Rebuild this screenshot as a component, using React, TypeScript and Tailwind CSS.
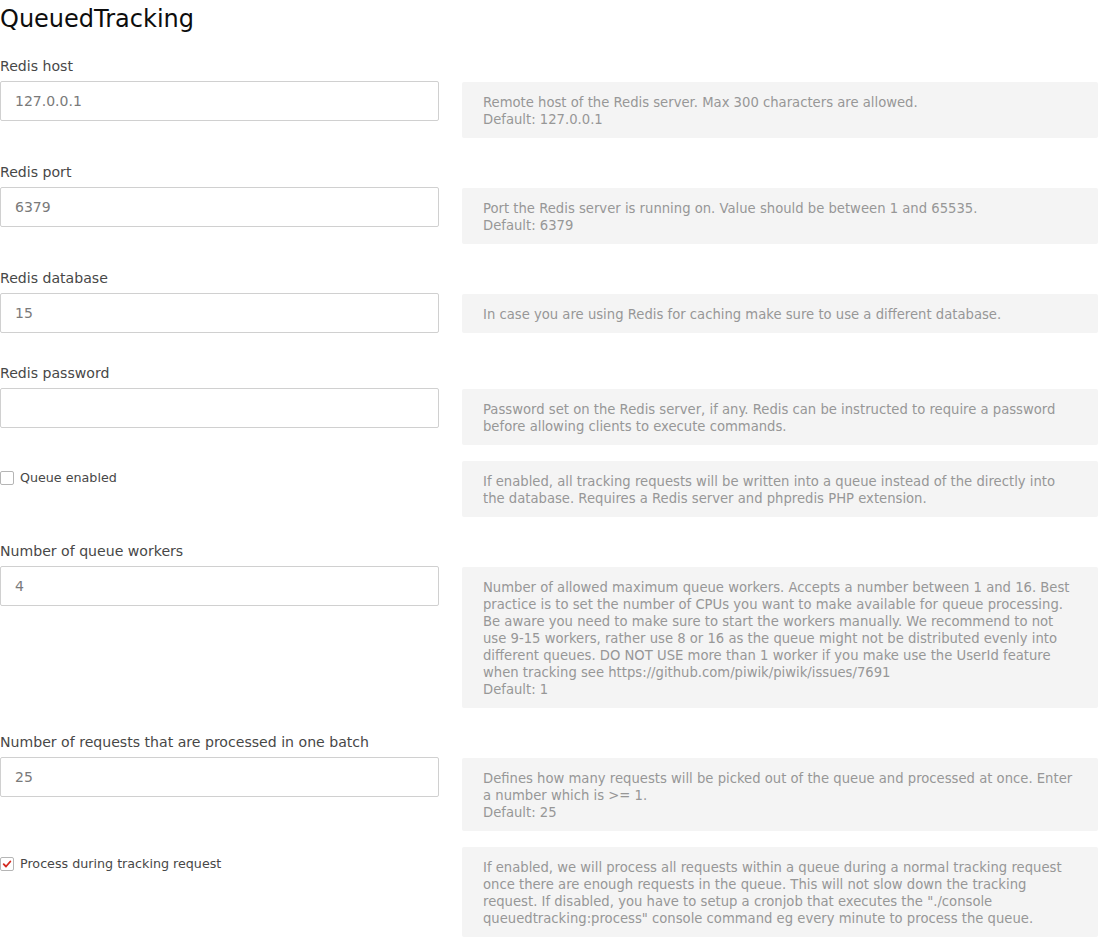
import { useState } from 'react';

type Setting =
  | { kind: 'text'; id: string; label: string; value: string; help: string[] }
  | { kind: 'check'; id: string; label: string; checked: boolean; help: string[] };

// help lines are kept as they break in the settings page
const settings: Setting[] = [
  {
    kind: 'text',
    id: 'redisHost',
    label: 'Redis host',
    value: '127.0.0.1',
    help: ['Remote host of the Redis server. Max 300 characters are allowed.', 'Default: 127.0.0.1'],
  },
  {
    kind: 'text',
    id: 'redisPort',
    label: 'Redis port',
    value: '6379',
    help: ['Port the Redis server is running on. Value should be between 1 and 65535.', 'Default: 6379'],
  },
  {
    kind: 'text',
    id: 'redisDatabase',
    label: 'Redis database',
    value: '15',
    help: ['In case you are using Redis for caching make sure to use a different database.'],
  },
  {
    kind: 'text',
    id: 'redisPassword',
    label: 'Redis password',
    value: '',
    help: [
      'Password set on the Redis server, if any. Redis can be instructed to require a password',
      'before allowing clients to execute commands.',
    ],
  },
  {
    kind: 'check',
    id: 'queueEnabled',
    label: 'Queue enabled',
    checked: false,
    help: [
      'If enabled, all tracking requests will be written into a queue instead of the directly into',
      'the database. Requires a Redis server and phpredis PHP extension.',
    ],
  },
  {
    kind: 'text',
    id: 'numQueueWorkers',
    label: 'Number of queue workers',
    value: '4',
    help: [
      'Number of allowed maximum queue workers. Accepts a number between 1 and 16. Best',
      'practice is to set the number of CPUs you want to make available for queue processing.',
      'Be aware you need to make sure to start the workers manually. We recommend to not',
      'use 9-15 workers, rather use 8 or 16 as the queue might not be distributed evenly into',
      'different queues. DO NOT USE more than 1 worker if you make use the UserId feature',
      'when tracking see https://github.com/piwik/piwik/issues/7691',
      'Default: 1',
    ],
  },
  {
    kind: 'text',
    id: 'numRequestsToProcess',
    label: 'Number of requests that are processed in one batch',
    value: '25',
    help: [
      'Defines how many requests will be picked out of the queue and processed at once. Enter',
      'a number which is >= 1.',
      'Default: 25',
    ],
  },
  {
    kind: 'check',
    id: 'processDuringTrackingRequest',
    label: 'Process during tracking request',
    checked: true,
    help: [
      'If enabled, we will process all requests within a queue during a normal tracking request',
      'once there are enough requests in the queue. This will not slow down the tracking',
      'request. If disabled, you have to setup a cronjob that executes the "./console',
      'queuedtracking:process" console command eg every minute to process the queue.',
    ],
  },
];

function HelpBox({ lines, className = '' }: { lines: string[]; className?: string }) {
  return (
    <div
      className={`flex-1 rounded-[2px] bg-[#f4f4f4] px-[21px] pt-[12px] pb-[10px] text-[13.2px] leading-[17px] text-[#979797] ${className}`}
    >
      {lines.map((line, i) => (
        <div key={i} className="whitespace-nowrap">
          {line}
        </div>
      ))}
    </div>
  );
}

function Checkbox({ checked, onChange }: { checked: boolean; onChange: () => void }) {
  return (
    <button
      type="button"
      onClick={onChange}
      className="flex h-[14px] w-[14px] shrink-0 items-center justify-center rounded-[2px] border border-[#b5b5b5] bg-white"
    >
      {checked && (
        <svg viewBox="0 0 12 12" className="h-[10px] w-[10px]">
          <path d="M2 6.2 L4.8 9 L10 3" fill="none" stroke="#d4291f" strokeWidth="2.2" strokeLinecap="round" strokeLinejoin="round" />
        </svg>
      )}
    </button>
  );
}

export default function App() {
  const [values, setValues] = useState<Record<string, string | boolean>>(() =>
    Object.fromEntries(settings.map(s => [s.id, s.kind === 'text' ? s.value : s.checked]))
  );

  const update = (id: string, v: string | boolean) => setValues(prev => ({ ...prev, [id]: v }));

  return (
    <div className="min-h-screen w-[1098px] bg-white font-['DejaVu_Sans',sans-serif]">
      {/* Title */}
      <h2 className="pt-[3px] text-[24px] leading-[32px] text-[#0d0d0d]">QueuedTracking</h2>

      <div className="flex flex-col pt-[21px]">
        {settings.map((s, idx) =>
          s.kind === 'text' ? (
            <div key={s.id} className={`flex items-start gap-[23px] ${idx === 0 ? '' : 'mt-[24px]'}`}>
              {/* Label + input */}
              <div className="w-[439px] shrink-0 pb-[6px]">
                <label htmlFor={s.id} className="mb-[5px] block text-[14.1px] leading-[20px] text-[#474747]">
                  {s.label}
                </label>
                <input
                  id={s.id}
                  type={s.id === 'redisPassword' ? 'password' : 'text'}
                  value={values[s.id] as string}
                  onChange={e => update(s.id, e.target.value)}
                  className="block h-[40px] w-full rounded-[2px] border border-[#d0d0d0] px-[14px] text-[14px] text-[#7a7a7a] outline-none"
                />
              </div>
              <HelpBox lines={s.help} className="mt-[26px]" />
            </div>
          ) : (
            <div key={s.id} className="mt-[16px] flex items-start gap-[23px]">
              {/* Checkbox */}
              <label className="mt-[8px] flex w-[439px] shrink-0 cursor-pointer items-center gap-[6px] text-[12.7px] leading-[17px] text-[#474747]">
                <Checkbox checked={values[s.id] as boolean} onChange={() => update(s.id, !values[s.id])} />
                <span>{s.label}</span>
              </label>
              <HelpBox lines={s.help} />
            </div>
          )
        )}
      </div>
    </div>
  );
}
